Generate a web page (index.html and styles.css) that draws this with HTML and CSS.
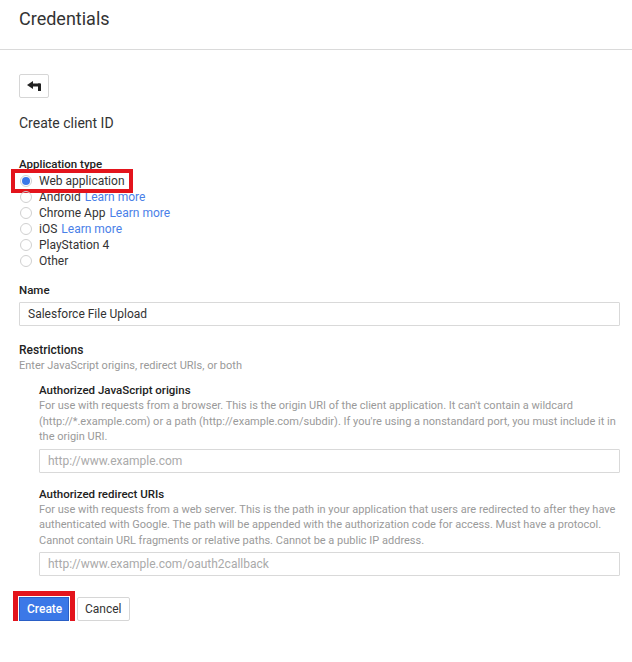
FILE: index.html
```html
<!DOCTYPE html>
<html lang="en">
<head>
  <meta charset="UTF-8" />
  <meta name="viewport" content="width=device-width, initial-scale=1" />
  <title>Credentials</title>
  <link rel="stylesheet" href="styles.css">
</head>
<body>
  <header class="page-head">
    <h1>Credentials</h1>
  </header>

  <main class="content">
    <button class="back-btn" aria-label="Back">
      <svg width="15" height="11" viewBox="0 0 15 11">
        <path d="M0 4 L6 0 L6 8 Z" fill="#222" />
        <rect x="5" y="2.5" width="8" height="3" fill="#222" />
        <rect x="11" y="2.5" width="3" height="7.5" fill="#222" />
      </svg>
    </button>

    <h2 class="sub-title">Create client ID</h2>

    <div class="field">
      <div class="label">Application type</div>
      <ul class="radios">
        <li class="radio-row marked"><span class="radio checked"></span>Web application</li>
        <li class="radio-row"><span class="radio"></span>Android <a href="#">Learn more</a></li>
        <li class="radio-row"><span class="radio"></span>Chrome App <a href="#">Learn more</a></li>
        <li class="radio-row"><span class="radio"></span>iOS <a href="#">Learn more</a></li>
        <li class="radio-row"><span class="radio"></span>PlayStation 4</li>
        <li class="radio-row"><span class="radio"></span>Other</li>
      </ul>
    </div>

    <div class="field name-field">
      <div class="label">Name</div>
      <input class="text-input" type="text" value="Salesforce File Upload" />
    </div>

    <div class="field restrictions">
      <div class="label big">Restrictions</div>
      <div class="hint">Enter JavaScript origins, redirect URIs, or both</div>

      <div class="sub-field">
        <div class="label">Authorized JavaScript origins</div>
        <p class="desc">For use with requests from a browser. This is the origin URI of the client application. It can't contain a wildcard (http://*.example.com) or a path (http://example.com/subdir). If you're using a nonstandard port, you must include it in the origin URI.</p>
        <input class="text-input" type="text" placeholder="http://www.example.com" />
      </div>

      <div class="sub-field">
        <div class="label">Authorized redirect URIs</div>
        <p class="desc">For use with requests from a web server. This is the path in your application that users are redirected to after they have authenticated with Google. The path will be appended with the authorization code for access. Must have a protocol. Cannot contain URL fragments or relative paths. Cannot be a public IP address.</p>
        <input class="text-input" type="text" placeholder="http://www.example.com/oauth2callback" />
      </div>
    </div>

    <div class="actions">
      <button class="btn primary marked">Create</button>
      <button class="btn">Cancel</button>
    </div>
  </main>
</body>
</html>
```

FILE: styles.css
```css
html, body {
  margin: 0;
  padding: 0;
  background: #fff;
  color: #212121;
  font-family: Roboto, "Liberation Sans", sans-serif;
  font-size: 13px;
}
.page-head {
  height: 50px;
  border-bottom: 1px solid #dadada;
  box-sizing: border-box;
  padding: 7px 19px 0;
}
.page-head h1 {
  margin: 0;
  font-size: 18px;
  font-weight: 400;
  line-height: 24px;
  color: #333;
}
.content {
  padding: 24px 12px 0 19px;
}
.back-btn {
  display: flex;
  align-items: center;
  justify-content: center;
  width: 30px;
  height: 24px;
  padding: 0;
  background: #fff;
  border: 1px solid #d6d6d6;
  border-radius: 2px;
}
.sub-title {
  margin: 16px 0 0;
  font-size: 14px;
  font-weight: 400;
  line-height: 18px;
  color: #333;
}
.field {
  margin-top: 24px;
}
.label {
  font-size: 11.5px;
  font-weight: 500;
  line-height: 16px;
  color: #222;
}
.label.big {
  font-size: 12px;
}
.radios {
  list-style: none;
  margin: 1px 0 0;
  padding: 0;
}
.radio-row {
  display: flex;
  align-items: center;
  gap: 7px;
  height: 16px;
  font-size: 12px;
  color: #333;
  width: max-content;
}
.radio-row a {
  color: #4a80e8;
  text-decoration: none;
  margin-left: -3px;
}
.radio {
  width: 12px;
  height: 12px;
  margin-left: 1px;
  border: 1px solid #d0d0d0;
  border-radius: 50%;
  box-sizing: border-box;
  position: relative;
}
.radio.checked::after {
  content: '';
  position: absolute;
  left: 1px; top: 1px;
  width: 8px; height: 8px;
  border-radius: 50%;
  background: #3b78e7;
}
.radio-row.marked {
  outline: 4px solid #e3141c;
  outline-offset: 0;
  padding: 0 4px 0 4px;
  margin-left: -4px;
}
.name-field {
  margin-top: 13px;
}
.text-input {
  display: block;
  width: 100%;
  height: 24px;
  margin-top: 4px;
  padding: 0 8px;
  box-sizing: border-box;
  border: 1px solid #d9d9d9;
  border-radius: 1px;
  font-family: inherit;
  font-size: 12px;
  color: #333;
}
.text-input::placeholder {
  color: #aaa;
}
.restrictions {
  margin-top: 16px;
}
.hint {
  font-size: 11px;
  line-height: 16px;
  color: #999;
}
.sub-field {
  margin: 8px 0 0 20px;
}
.sub-field + .sub-field {
  margin-top: 13px;
}
.desc {
  margin: 0 0 1px;
  font-size: 11px;
  line-height: 15.5px;
  color: #9a9a9a;
}
.actions {
  display: flex;
  gap: 8px;
  margin-top: 21px;
}
.btn {
  height: 24px;
  padding: 0 7px;
  font-family: inherit;
  font-size: 12px;
  background: #fff;
  color: #333;
  border: 1px solid #d6d6d6;
  border-radius: 2px;
}
.btn.primary {
  width: 50px;
  background: #3b78e7;
  border-color: #2a5fc6;
  color: #fff;
  font-weight: 500;
}
.btn.marked {
  border-radius: 0;
  outline: 5px solid #e3141c;
  outline-offset: 1px;
}
```
